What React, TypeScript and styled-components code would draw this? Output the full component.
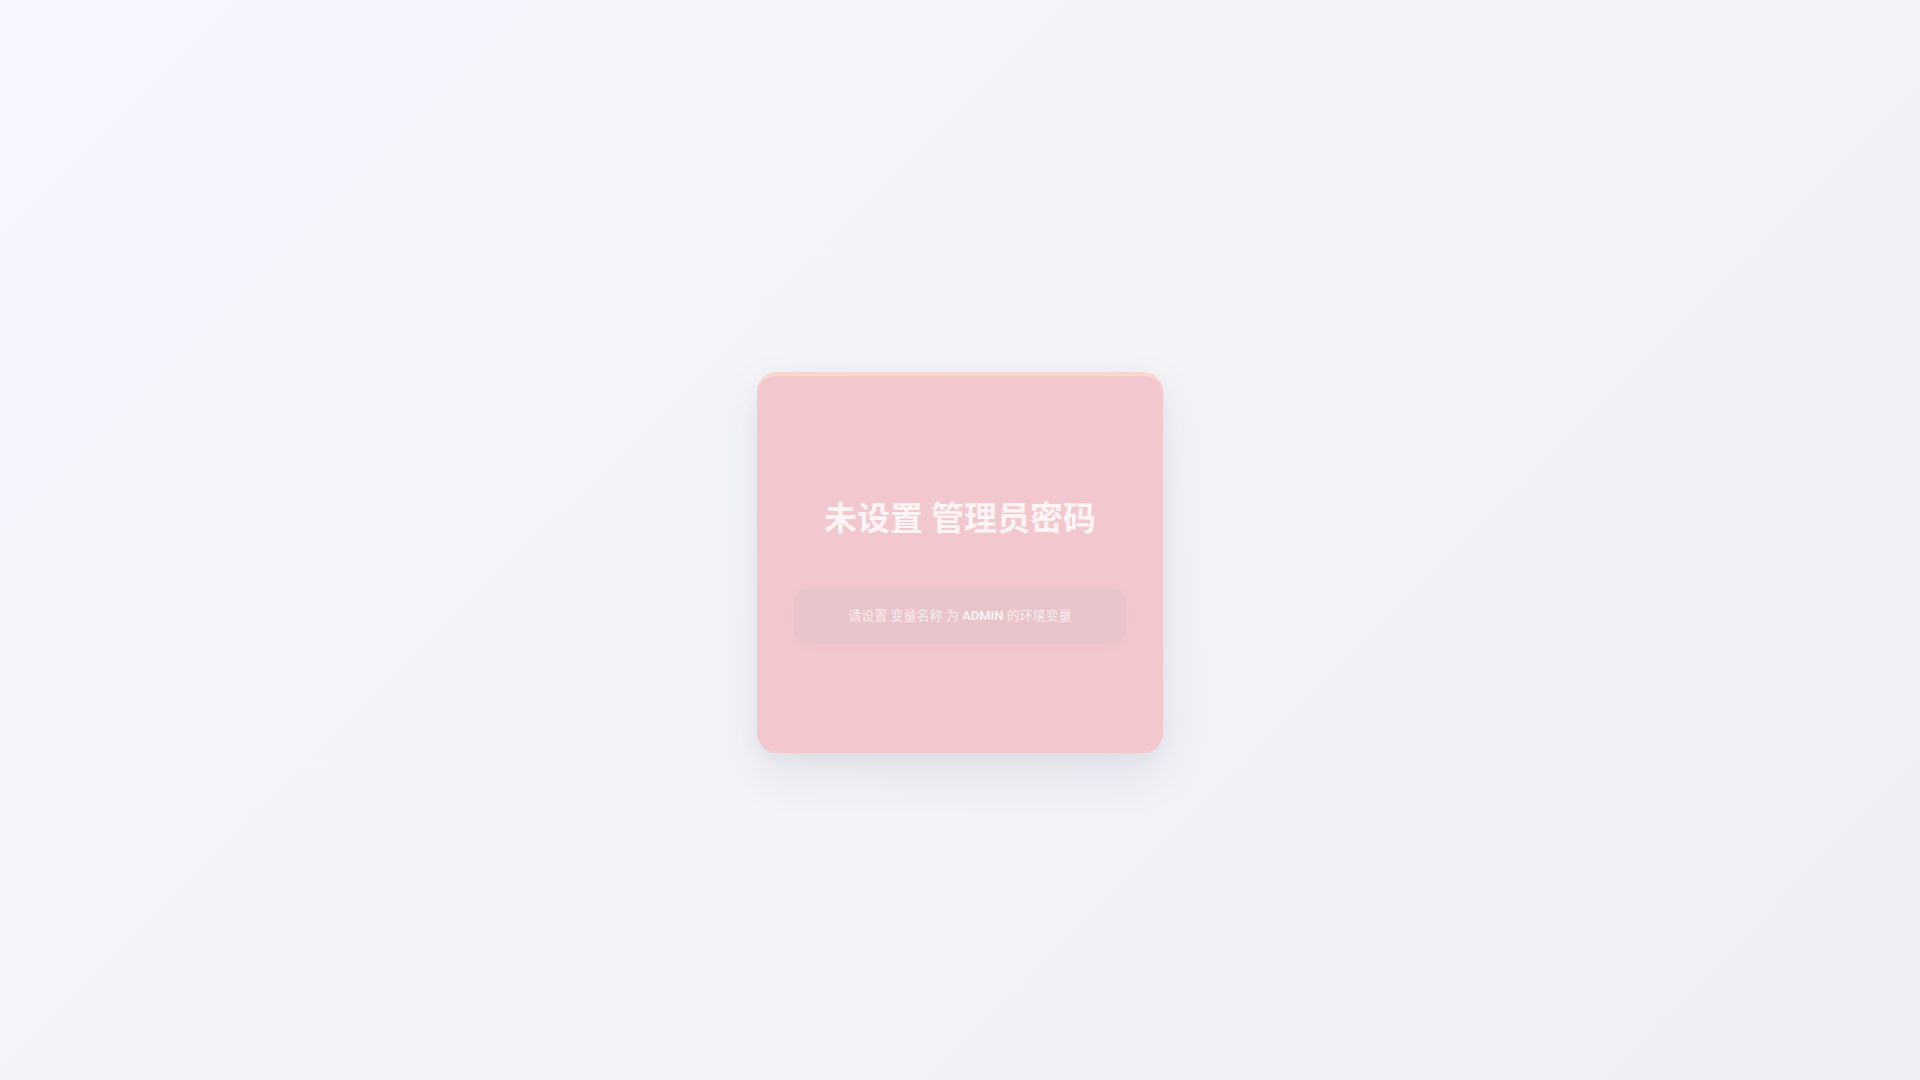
import React from "react";
import styled, { createGlobalStyle } from "styled-components";

const GlobalStyle = createGlobalStyle`
  html, body {
    margin: 0;
    padding: 0;
  }
  body {
    font-family: Roboto, "Noto Sans CJK SC", "Noto Sans", sans-serif;
    -webkit-font-smoothing: antialiased;
  }
`;

const Page = styled.div`
  box-sizing: border-box;
  width: 100%;
  min-height: 100vh;
  padding-top: 44px;
  display: flex;
  align-items: center;
  justify-content: center;
  background: linear-gradient(135deg, #f5f6fe 0%, #f3f3f8 50%, #efeef5 100%);
`;

const Card = styled.div`
  box-sizing: border-box;
  width: 406px;
  height: 381px;
  padding: 123px 37px 0;
  border-radius: 20px;
  border-top: 4px solid #f8d8cb;
  background: #f2c8ce;
  box-shadow: 0 20px 50px rgba(60, 50, 90, 0.09), 0 6px 16px rgba(60, 50, 90, 0.04);
  display: flex;
  flex-direction: column;
  align-items: stretch;
`;

const Title = styled.h1`
  margin: 0 0 50px;
  font-size: 33px;
  line-height: 1.2;
  font-weight: 700;
  text-align: center;
  color: rgba(255, 255, 255, 0.82);
`;

const Notice = styled.div`
  box-sizing: border-box;
  height: 56px;
  padding-bottom: 4px;
  border-radius: 16px;
  background: rgba(200, 180, 195, 0.22);
  display: flex;
  align-items: center;
  justify-content: center;
  font-size: 13px;
  color: rgba(255, 255, 255, 0.72);
  box-shadow: 0 2px 10px rgba(180, 150, 170, 0.08);
`;

const Strong = styled.strong`
  font-weight: 500;
  color: rgba(255, 255, 255, 0.92);
`;

export default function App() {
  return (
    <>
      <GlobalStyle />
      <Page>
        <Card>
          <Title>未设置 管理员密码</Title>
          <Notice>
            <span>
              请设置 变量名称 为 <Strong>ADMIN</Strong> 的环境变量
            </span>
          </Notice>
        </Card>
      </Page>
    </>
  );
}
